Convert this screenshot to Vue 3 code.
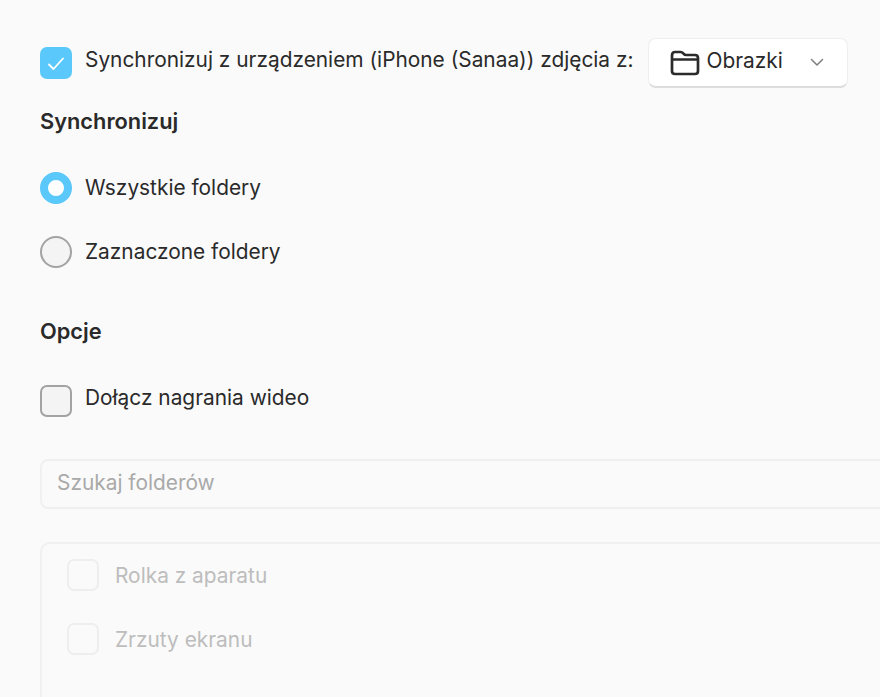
<script setup>
const folders = ['Rolka z aparatu', 'Zrzuty ekranu']
</script>

<template>
  <main class="page">
    <div class="top">
      <span class="box checked">
        <svg width="20" height="20" viewBox="0 0 20 20"><path d="M3 11.5 L7.5 16 L17 5.5" fill="none" stroke="#fff" stroke-width="1.8" stroke-linecap="round" stroke-linejoin="round"/></svg>
      </span>
      <span class="label">Synchronizuj z urządzeniem (iPhone (Sanaa)) zdjęcia z:</span>
      <button class="select">
        <svg class="folder" width="30" height="26" viewBox="0 0 30 26"><path d="M2 5.5 C2 3 3 2 5 2 H10.5 C12 2 12.6 2.6 13.5 3.6 C14.3 4.6 15 5 16.2 5 H25 C27 5 28 6 28 8 V21 C28 23 27 24 25 24 H5 C3 24 2 23 2 21 Z M2 9.5 H28" fill="none" stroke="#2b2b2b" stroke-width="2.7" stroke-linejoin="round"/></svg>
        <span class="select-text">Obrazki</span>
        <svg class="chev" width="14" height="9" viewBox="0 0 14 9"><path d="M1.5 1.5 L7 7 L12.5 1.5" fill="none" stroke="#7d7d7d" stroke-width="1.5" stroke-linecap="round" stroke-linejoin="round"/></svg>
      </button>
    </div>

    <h2 class="head first">Synchronizuj</h2>
    <div class="row radio-a"><span class="radio on"></span><span class="label">Wszystkie foldery</span></div>
    <div class="row radio-b"><span class="radio"></span><span class="label">Zaznaczone foldery</span></div>

    <h2 class="head second">Opcje</h2>
    <div class="row video"><span class="box"></span><span class="label">Dołącz nagrania wideo</span></div>

    <div class="search"><span>Szukaj folderów</span></div>

    <div class="list">
      <div v-for="f in folders" :key="f" class="item"><span class="box faint"></span><span class="label">{{ f }}</span></div>
    </div>
  </main>
</template>

<style scoped>
.page {
  height: 697px;
  box-sizing: border-box;
  padding: 38px 0 0 40px;
  overflow: hidden;
  background: #fafafa;
  color: #2a2a2a;
  font-family: Inter, "Liberation Sans", sans-serif;
  font-size: 20.87px;
}
.top { display: flex; align-items: center; height: 50px; }
.row { display: flex; align-items: center; height: 32px; }
.label { margin-left: 13px; line-height: 32px; white-space: nowrap; margin-top: -1px; }
.top .label { margin-top: -6px; }
.video .label { margin-top: -7px; }
.box {
  flex: none; width: 32px; height: 32px; box-sizing: border-box;
  border: 2px solid #a3a3a3; border-radius: 7px; background: #f4f4f4;
  display: flex; align-items: center; justify-content: center;
}
.box.checked { border: 0; background: #5ac8fa; }
.box.faint { border-color: #eeeeee; background: #fafafa; }
.select {
  margin-left: 15px; width: 200px; height: 50px; box-sizing: border-box;
  display: flex; align-items: center; padding: 0 0 0 21px;
  background: #fff; border: 1px solid #eeeeee; border-bottom: 2px solid #dddddd;
  border-radius: 8px; color: inherit; font: inherit;
}
.select-text { margin-left: 6px; margin-top: -4px; }
.chev { margin-left: 27px; }
.head { margin: 0; font-size: 21.8px; font-weight: 600; line-height: 32px; }
.head.first { margin-top: 17px; }
.radio-a { margin-top: 35px; }
.radio-b { margin-top: 32px; }
.head.second { margin-top: 47px; }
.video { margin-top: 38px; }
.radio {
  flex: none; width: 32px; height: 32px; box-sizing: border-box;
  border: 2px solid #a3a3a3; border-radius: 50%; background: #f4f4f4;
}
.radio.on { border: 8px solid #5ac8fa; background: #fff; }
.search {
  margin-top: 42px; width: 900px; height: 50px; box-sizing: border-box;
  padding-left: 15px; display: flex; align-items: center;
  border: 2px solid #f0f0f0; border-radius: 8px; color: #a9a9a9;
}
.search span { margin-top: -3px; }
.list {
  margin-top: 33px; width: 900px; height: 300px; box-sizing: border-box;
  padding: 15px 0 0 25px; border: 2px solid #f0f0f0; border-radius: 10px;
  color: #bdbdbd; display: flex; flex-direction: column; gap: 32px;
}
.item { display: flex; align-items: center; height: 32px; }
.item .label { margin-left: 16px; margin-top: 1px; }
</style>

<style>
html, body { margin: 0; overflow: hidden; background: #fafafa; }
</style>
